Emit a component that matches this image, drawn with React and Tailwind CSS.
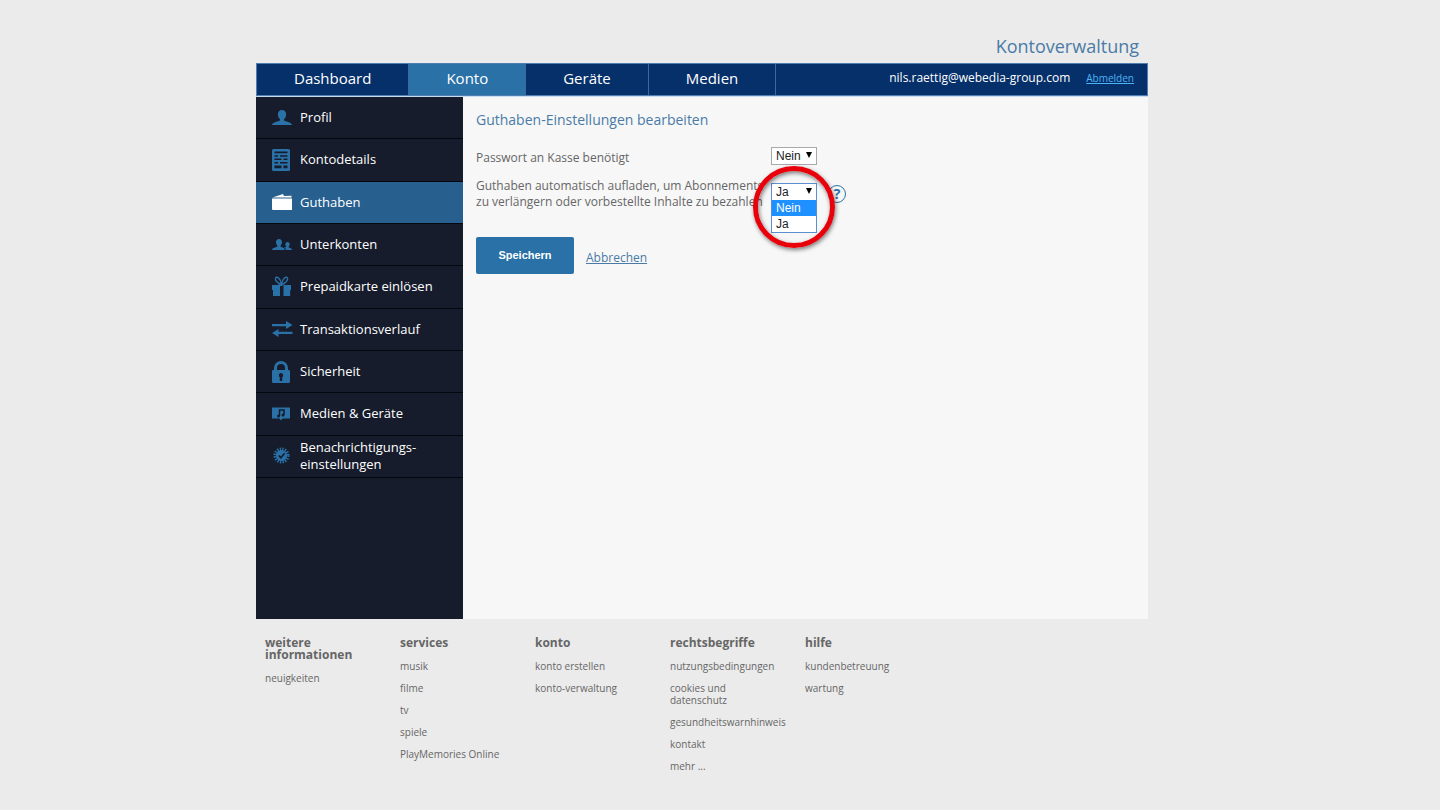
import React, { useState } from "react";

const tabs = ["Dashboard", "Konto", "Geräte", "Medien"];

const icons = {
  profile: (
    <path d="M11 3c2.600 0 4.100 1.800 4.100 4.400 0 1.900-.8 3.600-2 4.600v1.400c.6 1 7.700 1.600 7.900 4.600H1c.2-3 7.300-3.600 7.900-4.600V12c-1.200-1-2-2.700-2-4.600C6.900 4.800 8.400 3 11 3z" />
  ),
  details: (
    <path
      fillRule="evenodd"
      d="M2.500 0h15A1.500 1.500 0 0 1 19 1.500v19a1.500 1.500 0 0 1-1.500 1.500h-15A1.500 1.500 0 0 1 1 20.500v-19A1.500 1.500 0 0 1 2.500 0zM3.500 2.500v1.800h13V2.500zM3.500 6.200v1.500H7V6.200zM9 6.200v1.500h7.500V6.200zM3.500 9.600v1.500h7V9.600zM12.500 9.600v1.500h4V9.600zM3.500 13v1.500H7V13zM9 13v1.500h7.500V13zM3.500 16.600v2.600h7v-2.600zM12.500 16.600v2.600h4v-2.600z"
    />
  ),
  wallet: (
    <>
      <path d="M1 7.500h20V19H2a1 1 0 0 1-1-1z" />
      <path d="M1.500 6.600 12 3l1 2 7.500-.3v1.900z" />
    </>
  ),
  users: (
    <>
      <path d="M8 5c1.900 0 3 1.300 3 3.200 0 1.300-.5 2.500-1.400 3.200v1c.6.8 4.200 1.100 4.400 3.600H1c.2-2.500 4.800-2.800 5.400-3.600v-1C5.500 10.700 5 9.500 5 8.200 5 6.300 6.100 5 8 5z" />
      <path d="M16.500 8c1.400 0 2.200 1 2.200 2.300 0 .9-.4 1.700-1 2.200v.7c.4.6 3.100.8 3.300 2.800h-6c-.1-1.200-1-2-2-2.600 1.100-.2 2-.3 2.200-.5v-.4c-.5-.5-.9-1.300-.9-2.200 0-1.300.8-2.300 2.200-2.300z" />
    </>
  ),
  gift: (
    <>
      <path d="M1 9h5.500l1.500-.8V20H2v-6H1zM9 8.500h2.500V10H9zM12.500 8.200l1.500.8h6v5h-.8v6h-6.700zM8 8.200h1V20H8z" />
      <path
        fill="none"
        stroke="currentColor"
        strokeWidth="1.400"
        d="M10.500 8.500C7 7.500 3.500 4.500 4.500 2c1.200-2 5 0 6 6.500 1-6.500 4.800-8.500 6-6.500 1 2.500-2.500 5.500-6 6.500z"
      />
    </>
  ),
  transfer: (
    <>
      <path d="M1 6h14V3l6.500 4-6.500 4V8.300H1z" />
      <path d="M21.500 13.700H7.500V11L1 15l6.500 4v-3h14z" />
    </>
  ),
  lock: (
    <path
      fillRule="evenodd"
      d="M3 9V7a7 7 0 0 1 14 0v2h.7a1.300 1.300 0 0 1 1.300 1.300v10.400a1.300 1.300 0 0 1-1.300 1.300H2.300A1.300 1.300 0 0 1 1 20.700V10.300A1.300 1.300 0 0 1 2.300 9zM6 9h8V7a4 4 0 0 0-8 0zM10 12a2.300 2.300 0 0 0-1.200 4.200V20h2.400v-3.800A2.300 2.300 0 0 0 10 12z"
    />
  ),
  media: (
    <>
      <path d="M1 4.500h18v11h-7.500l-1.500 2-1.500-2H1z" />
      <path fill="none" stroke="#161c2b" strokeWidth="1.500" d="M8.500 13V7H13v5" />
      <circle cx="7.500" cy="13" r="1.500" fill="#161c2b" />
      <circle cx="12" cy="12" r="1.500" fill="#161c2b" />
    </>
  ),
  badge: (
    <>
      <circle cx="10.500" cy="10.500" r="5.500" />
      <circle
        cx="10.500"
        cy="10.500"
        r="6.300"
        fill="none"
        stroke="currentColor"
        strokeWidth="3.600"
        strokeDasharray="1.240 1.235"
      />
      <path
        d="m7.800 10.500 2 2.200 3.800-4.400"
        fill="none"
        stroke="#161c2b"
        strokeWidth="1.700"
      />
    </>
  ),
};

const menu = [
  { name: "Profil", icon: "profile" },
  { name: "Kontodetails", icon: "details" },
  { name: "Guthaben", icon: "wallet" },
  { name: "Unterkonten", icon: "users" },
  { name: "Prepaidkarte einlösen", icon: "gift" },
  { name: "Transaktionsverlauf", icon: "transfer" },
  { name: "Sicherheit", icon: "lock" },
  { name: "Medien & Geräte", icon: "media" },
  { name: "Benachrichtigungs-einstellungen", icon: "badge" },
];

const footer = [
  { title: "weitere informationen", links: ["neuigkeiten"] },
  {
    title: "services",
    links: ["musik", "filme", "tv", "spiele", "PlayMemories Online"],
  },
  { title: "konto", links: ["konto erstellen", "konto-verwaltung"] },
  {
    title: "rechtsbegriffe",
    links: [
      "nutzungsbedingungen",
      "cookies und datenschutz",
      "gesundheitswarnhinweis",
      "kontakt",
      "mehr ...",
    ],
  },
  { title: "hilfe", links: ["kundenbetreuung", "wartung"] },
];

const Select = ({ id, value, onChange, open }) => (
  <div className="relative w-[46px]">
    <select
      id={id}
      value={value}
      onChange={(e) => onChange(e.target.value)}
      className={`block h-[18px] w-full appearance-none border bg-white pl-1 font-['Liberation_Sans',sans-serif] text-xs leading-4 text-[#222] outline-none ${
        open ? "border-[#5b8fd0]" : "border-[#a9a9a9]"
      }`}>
      <option>Nein</option>
      <option>Ja</option>
    </select>
    <svg
      className="pointer-events-none absolute right-[5px] top-[5px] h-[6px] w-[6px] text-black"
      fill="currentColor"
      viewBox="0 0 6 6">
      <path d="M0 0h6L3 6z" />
    </svg>
  </div>
);

const Header = () => (
  <header>
    <h1 className="pb-[2px] pr-[9px] pt-8 text-right text-lg leading-[29px] text-[#4a7ba6]">
      Kontoverwaltung
    </h1>
    <nav className="flex h-[33px] border border-[#4f7fb0] bg-[#06306a] text-white">
      {tabs.map((tab) => (
        <a
          key={tab}
          href="#"
          className={`border-r border-[#3a68a0] px-[37px] text-[15px] leading-[29px] ${
            tab === "Konto" ? "bg-[#2a71a8]" : ""
          }`}>
          {tab}
        </a>
      ))}
      <div className="ml-auto flex gap-4 pr-[13px]">
        <span className="text-xs leading-7">
          nils.raettig@webedia-group.com
        </span>
        <a href="#" className="text-[10px] leading-7 text-[#4db5f5] underline">
          Abmelden
        </a>
      </div>
    </nav>
  </header>
);

const Sidebar = () => (
  <aside className="w-[207px] shrink-0 bg-[#161c2b]">
    <ul className="grid min-h-[381px] auto-rows-fr">
      {menu.map((item) => {
        const active = item.name === "Guthaben";
        return (
          <li key={item.name} className="flex border-b border-[#05080f]">
            <a
              href="#"
              className={`flex flex-1 items-center gap-[7px] pl-[15px] text-[13px] leading-[17px] text-white ${
                active ? "bg-[#27608f]" : ""
              }`}>
              <svg
                className={`h-[22px] w-[22px] shrink-0 ${
                  active ? "text-white" : "text-[#2a71a8]"
                }`}
                fill="currentColor"
                viewBox="0 0 22 22">
                {icons[item.icon]}
              </svg>
              <span className="w-[140px]">{item.name}</span>
            </a>
          </li>
        );
      })}
    </ul>
  </aside>
);

const Settings = () => {
  const [password, setPassword] = useState("Nein");
  const [autoTopUp, setAutoTopUp] = useState("Ja");
  const [hovered, setHovered] = useState("Nein");

  return (
    <main className="flex-1 bg-[#f7f7f7] px-[13px] pt-[11px]">
      <h2 className="text-sm leading-[23px] text-[#4a7ba6]">
        Guthaben-Einstellungen bearbeiten
      </h2>
      <form onSubmit={(e) => e.preventDefault()}>
        <div className="mt-4 flex items-start text-xs leading-4 text-[#666]">
          <label htmlFor="password" className="w-[295px] pt-[3px]">
            Passwort an Kasse benötigt
          </label>
          <Select id="password" value={password} onChange={setPassword} />
        </div>
        <div className="mt-3 flex text-xs leading-4 text-[#666]">
          <label htmlFor="topup" className="w-[295px]">
            Guthaben automatisch aufladen, um Abonnements zu verlängern oder
            vorbestellte Inhalte zu bezahlen
          </label>
          <div className="relative mt-[5px]">
            <Select id="topup" value={autoTopUp} onChange={setAutoTopUp} open />
            {/* Open option list */}
            <ul
              role="listbox"
              className="absolute left-0 top-[17px] z-10 w-full border border-t-0 border-[#5b8fd0] bg-white font-['Liberation_Sans',sans-serif] text-[#222]">
              {["Nein", "Ja"].map((option) => (
                <li
                  key={option}
                  role="option"
                  aria-selected={hovered === option}
                  onMouseEnter={() => setHovered(option)}
                  onClick={() => setAutoTopUp(option)}
                  className={`pl-1 ${
                    hovered === option ? "bg-[#1e90ff] text-white" : ""
                  }`}>
                  {option}
                </li>
              ))}
            </ul>
            {/* Highlight ring */}
            <div className="pointer-events-none absolute -left-[18px] -top-[17px] z-20 h-[82px] w-[82px] rounded-full border-5 border-[#e8000b] shadow-[1px_2px_4px_rgba(0,0,0,0.5),inset_1px_2px_4px_rgba(0,0,0,0.5)]" />
          </div>
          <button
            type="button"
            aria-label="Hilfe"
            className="ml-[11px] mt-[7px] h-[18px] w-[18px] rounded-full border border-[#2a71a8] text-sm font-bold leading-4 text-[#2a71a8]">
            ?
          </button>
        </div>
        <div className="mt-[27px] flex items-center gap-3">
          <button
            type="submit"
            className="h-[37px] w-[98px] rounded-xs bg-[#2a71a8] font-['Liberation_Sans',sans-serif] text-[11px] font-bold text-white">
            Speichern
          </button>
          <a href="#" className="pt-1 text-xs text-[#4a7ba6] underline">
            Abbrechen
          </a>
        </div>
      </form>
    </main>
  );
};

const Footer = () => (
  <footer className="flex pl-[9px] pt-[18px] text-[#666]">
    {footer.map((column) => (
      <div key={column.title} className="w-[135px] pr-6">
        <h3 className="text-xs font-bold leading-3">{column.title}</h3>
        <ul className="mt-[11px] space-y-[10px]">
          {column.links.map((link) => (
            <li key={link} className="text-[10px] leading-3">
              <a href="#">{link}</a>
            </li>
          ))}
        </ul>
      </div>
    ))}
  </footer>
);

const App = () => (
  <div className="min-h-screen bg-[#ebebeb] pr-9 font-['Open_Sans',sans-serif]">
    <div className="mx-auto max-w-[892px]">
      <Header />
      <div className="flex min-h-[523px] border-t border-[#c8dcf0]">
        <Sidebar />
        <Settings />
      </div>
      <Footer />
    </div>
  </div>
);

export default App;
